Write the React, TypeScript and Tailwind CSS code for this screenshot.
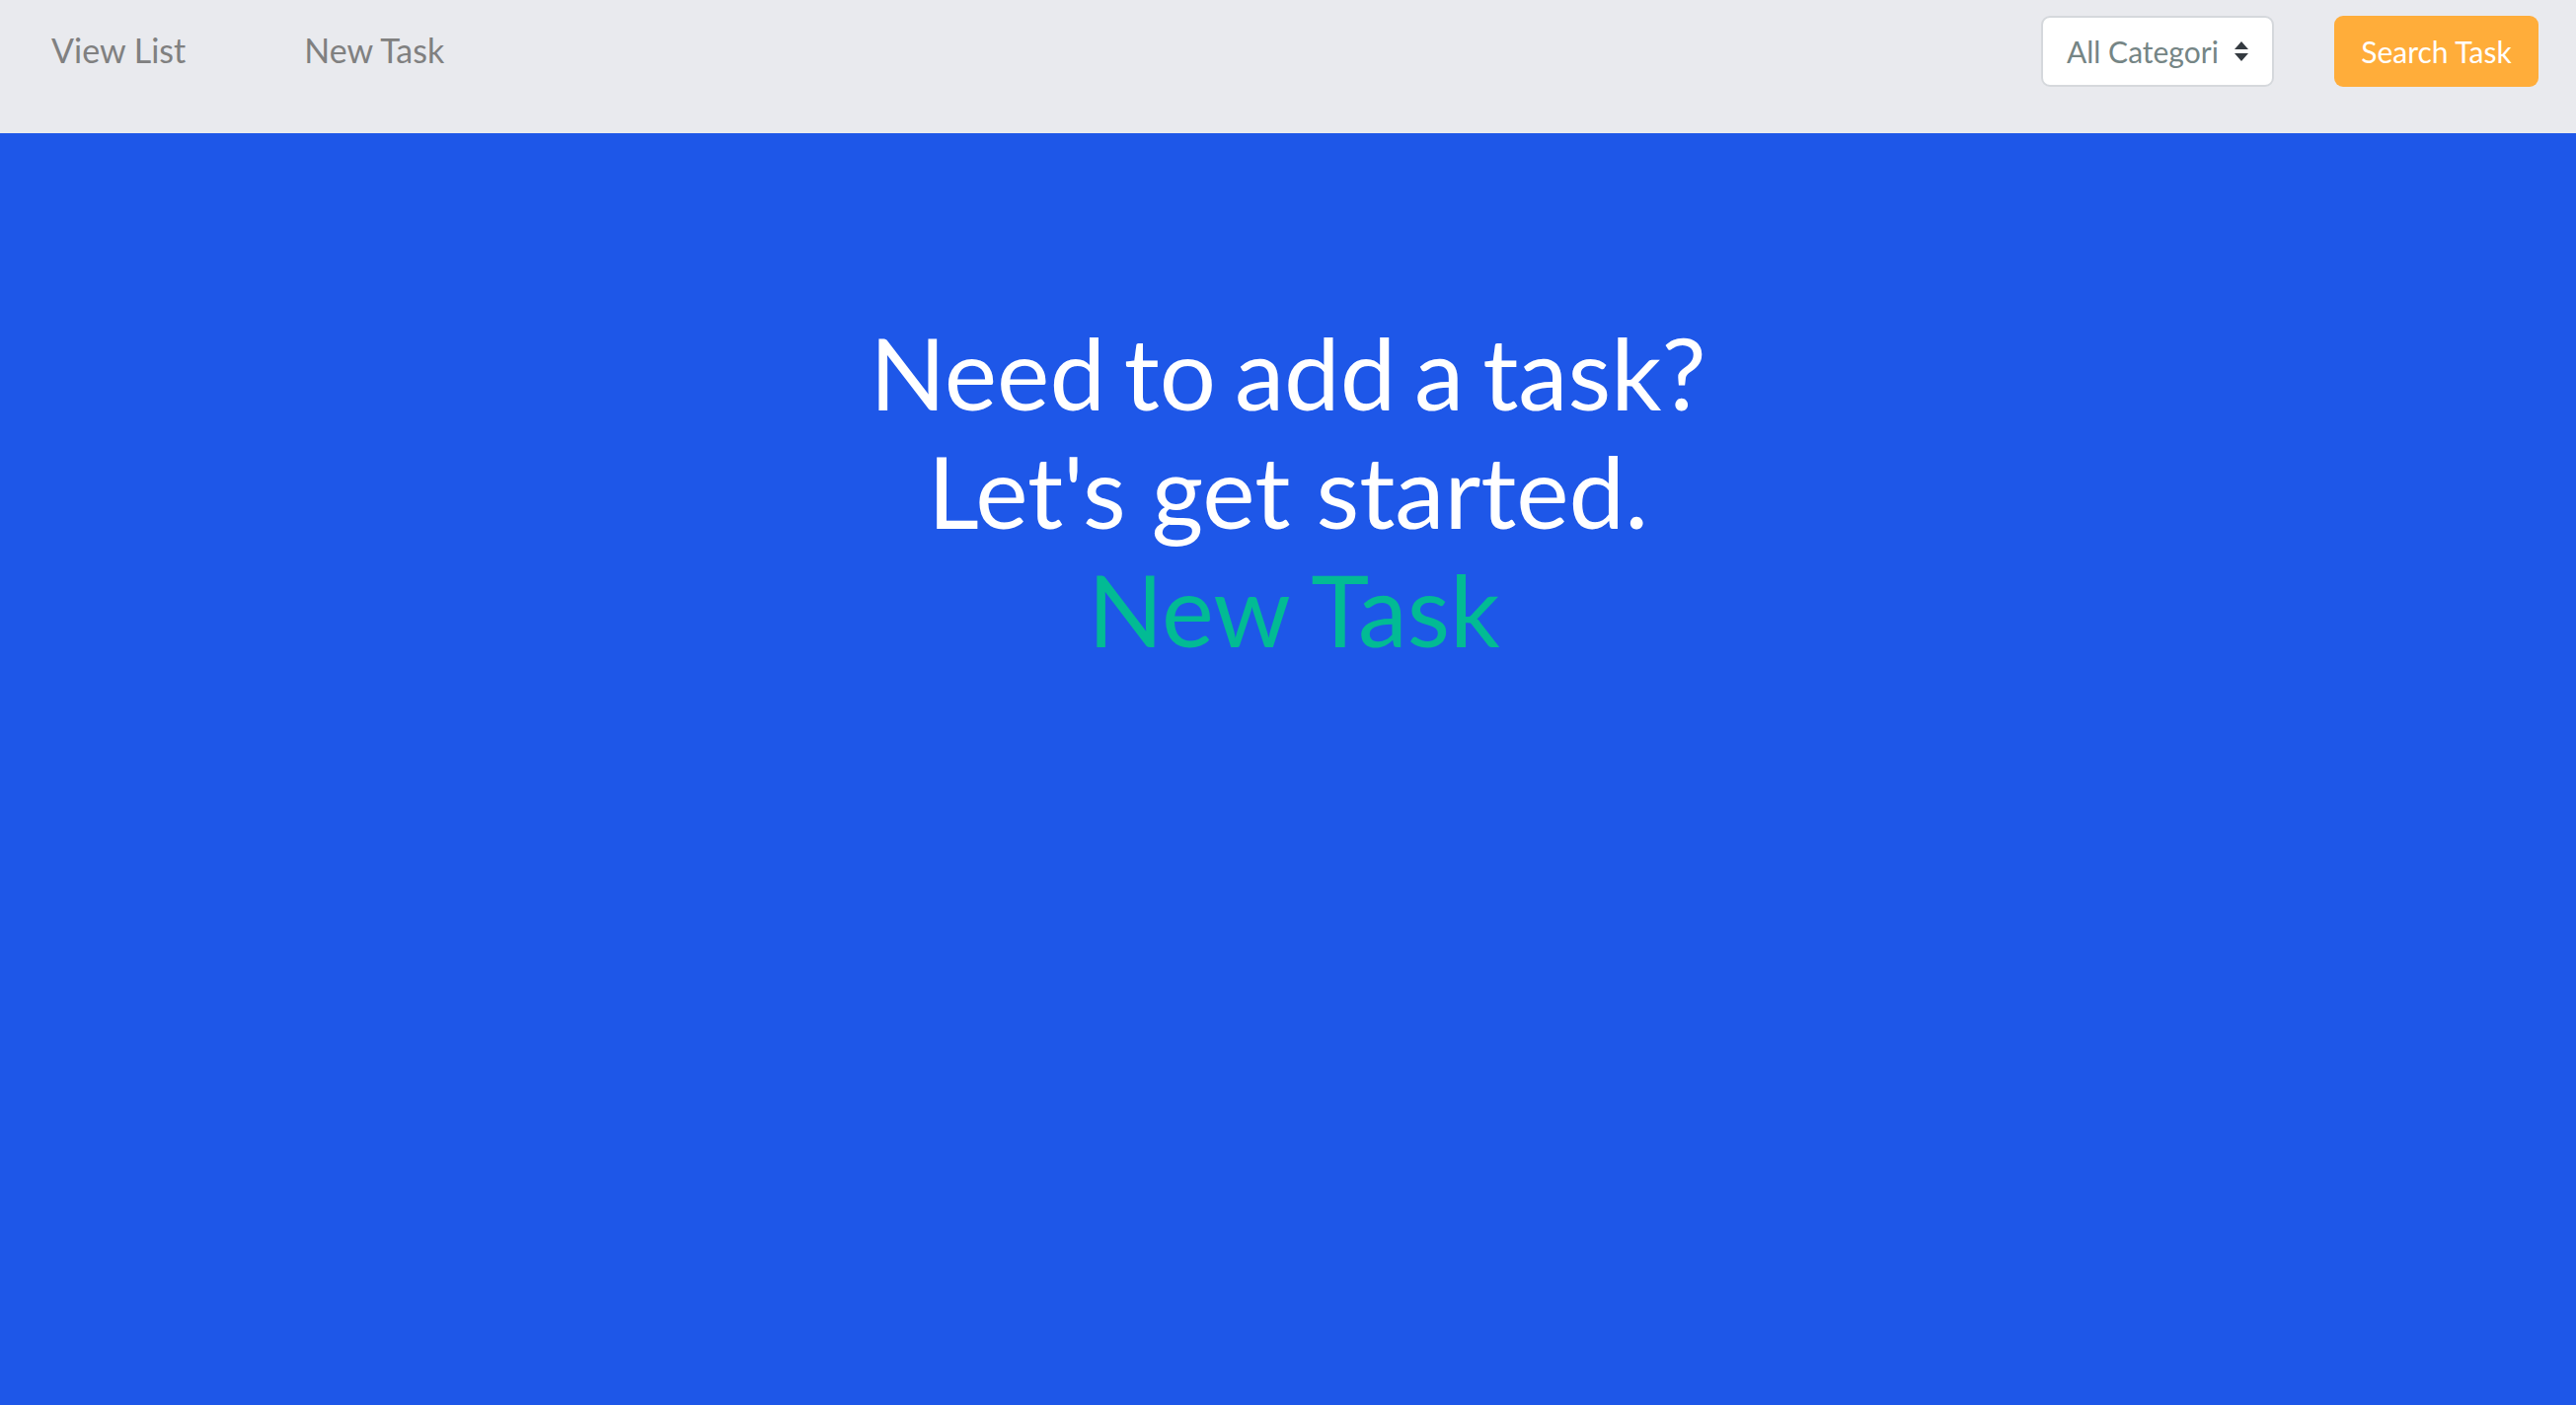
import React from 'react';

const SortArrows: React.FC = () => (
  <svg width="16" height="22" viewBox="0 0 16 22" className="shrink-0">
    <path d="M8 1 L15 9 L1 9 Z" fill="#343a40" />
    <path d="M1 13 L15 13 L8 21 Z" fill="#343a40" />
  </svg>
);

const App: React.FC = () => {
  return (
    <div className="min-h-screen flex flex-col bg-[#1e57e8] font-['Lato',sans-serif]">
      {/* Navbar */}
      <nav className="h-[135px] bg-[#e9eaee] flex items-start justify-between pl-[52px] pr-[38px] pt-[16px]">
        <div className="flex items-center gap-[120px] pt-[14px]">
          <a className="text-[34px] leading-[42px] text-[#808080] cursor-pointer">View List</a>
          <a className="text-[34px] leading-[42px] text-[#808080] cursor-pointer">New Task</a>
        </div>
        <div className="flex items-center gap-[61px]">
          <div className="w-[236px] h-[72px] bg-white border-2 border-[#d5d8dc] rounded-[9px] flex items-center justify-between pl-[24px] pr-[23px]">
            <span className="text-[30px] leading-none text-[#758585] whitespace-nowrap">All Categori</span>
            <SortArrows />
          </div>
          <button className="w-[207px] h-[72px] bg-[#ffad3a] rounded-[9px] text-white text-[30px] leading-none flex items-center justify-center">
            Search Task
          </button>
        </div>
      </nav>

      {/* Hero */}
      <main className="flex-1 flex flex-col items-center pt-[182px] text-center">
        <h1 className="text-[101px] leading-[120px] text-white font-normal flex flex-col items-center">
          <span className="[word-spacing:-7px]">Need to add a task?</span>
          <span>Let's get started.</span>
        </h1>
        <a className="ml-[12px] text-[100px] leading-[120px] text-[#02bb94] cursor-pointer">New Task</a>
      </main>
    </div>
  );
};

export default App;
